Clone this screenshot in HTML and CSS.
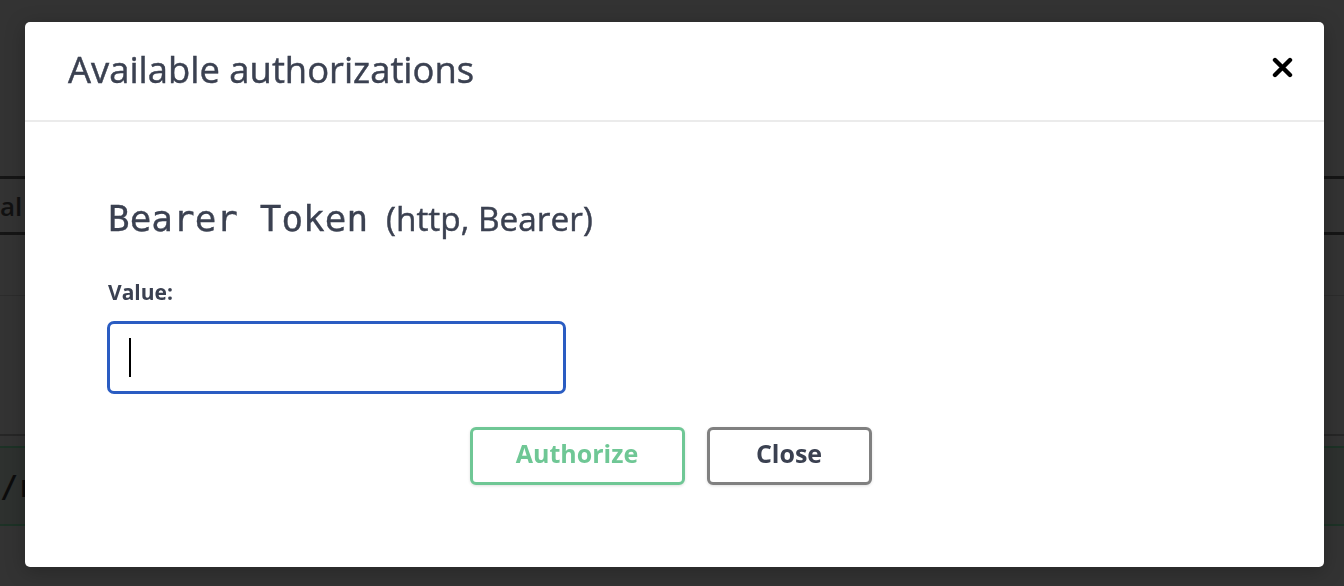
FILE: index.html
```html
<!DOCTYPE html>
<html lang="en">
<head>
<meta charset="utf-8">
<title>Available authorizations</title>
<link rel="stylesheet" href="styles.css">
</head>
<body>
<div class="page">
  <div class="page-gap-top"></div>
  <div class="page-btn-row"><span class="page-btn">al server</span></div>
  <div class="page-gap-a"></div>
  <div class="page-rule-light"></div>
  <div class="page-gap-b"></div>
  <div class="page-rule-dark"></div>
  <div class="page-gap-c"></div>
  <div class="opblock"><span class="opblock-path">/r</span></div>
</div>

<div class="overlay">
  <div class="modal">
    <div class="modal-header">
      <h3 class="modal-title">Available authorizations</h3>
      <button class="modal-close" aria-label="Close">
        <svg width="21" height="21" viewBox="0 0 21 21"><path d="M3 3 L18 18 M18 3 L3 18" stroke="#000" stroke-width="4.4" stroke-linecap="round" fill="none"/></svg>
      </button>
    </div>
    <div class="modal-body">
      <h4 class="auth-title"><code class="auth-name">Bearer Token</code><span class="auth-type">(http, Bearer)</span></h4>
      <label class="field-label">Value:</label>
      <div class="field-input"><span class="caret"></span></div>
      <div class="auth-actions">
        <button class="btn btn-authorize">Authorize</button>
        <button class="btn btn-close">Close</button>
      </div>
    </div>
  </div>
</div>
</body>
</html>
```

FILE: styles.css
```css
html, body {
  margin: 0;
  padding: 0;
}
body {
  width: 1344px;
  height: 586px;
  overflow: hidden;
  background: #333333;
  font-family: "Open Sans", "Noto Sans", sans-serif;
  color: #3b4151;
}

/* dimmed page behind the modal */
.page {
  display: flex;
  flex-direction: column;
}
.page-gap-top { height: 176px; }
.page-btn-row {
  display: flex;
  height: 53px;
  border-top: 3px solid #151515;
  border-bottom: 3px solid #151515;
  align-items: center;
}
.page-btn {
  margin-left: 0;
  font-size: 26px;
  font-weight: 600;
  color: #111;
  white-space: nowrap;
}
.page-gap-a { height: 60px; }
.page-rule-light { height: 1px; background: #2c2c2c; }
.page-gap-b { height: 138px; }
.page-rule-dark { height: 2px; background: #262626; }
.page-gap-c { height: 10px; }
.opblock {
  height: 76px;
  border-top: 2px solid #1d3226;
  border-bottom: 2px solid #1d3226;
  background: #2e312f;
  display: flex;
  align-items: center;
}
.opblock-path {
  margin-left: 0;
  font-family: "DejaVu Sans Mono", monospace;
  font-size: 30px;
  font-weight: bold;
  color: #0c0c0c;
}

/* modal */
.overlay {
  position: fixed;
  inset: 0;
  padding: 22px 0 0 25px;
  box-sizing: border-box;
}
.modal {
  width: 1299px;
  height: 545px;
  background: #ffffff;
  border-radius: 5px;
  box-shadow: 0 4px 20px rgba(0, 0, 0, 0.25);
  display: flex;
  flex-direction: column;
}
.modal-header {
  height: 94px;
  padding: 0 31px 4px 43px;
  border-bottom: 2px solid #ebebeb;
  display: flex;
  align-items: center;
  justify-content: space-between;
}
.modal-title {
  margin: 0;
  font-size: 36.4px;
  line-height: 49px;
  font-weight: 400;
  color: #3b4151;
  -webkit-text-stroke: 0.45px #3b4151;
}
.modal-close {
  border: 0;
  background: none;
  padding: 0;
  width: 21px;
  height: 21px;
  display: flex;
  margin-top: -3px;
}

.modal-body {
  padding: 74px 0 0 82px;
  display: flex;
  flex-direction: column;
}
.auth-title {
  margin: 0;
  line-height: 44px;
  font-weight: 400;
  white-space: nowrap;
  padding-left: 1px;
}
.auth-name {
  font-family: "DejaVu Sans Mono", monospace;
  font-size: 36px;
  color: #3b4151;
  -webkit-text-stroke: 0.3px #3b4151;
}
.auth-type {
  margin-left: 18px;
  font-size: 33.4px;
  color: #3b4151;
  -webkit-text-stroke: 0.45px #3b4151;
}
.field-label {
  margin-top: 31px;
  padding-left: 1px;
  font-size: 21px;
  line-height: 28px;
  font-weight: 700;
}
.field-input {
  margin-top: 15px;
  width: 459px;
  height: 73px;
  box-sizing: border-box;
  border: 3px solid #2a5cc2;
  border-radius: 7px;
  padding-left: 19px;
  display: flex;
  align-items: center;
}
.caret {
  width: 2px;
  height: 39px;
  background: #000;
}

.auth-actions {
  margin-top: 33px;
  padding-right: 90px;
  display: flex;
  justify-content: center;
  gap: 22px;
}
.btn {
  height: 58px;
  box-sizing: border-box;
  border: 3px solid #808080;
  border-radius: 6px;
  background: #fff;
  font-family: "Open Sans", "Noto Sans", sans-serif;
  font-size: 25px;
  line-height: 1;
  font-weight: 700;
  color: #3b4151;
  box-shadow: 0 1px 3px rgba(0, 0, 0, 0.12);
  padding: 0 0 5px;
}
.btn-authorize {
  width: 215px;
  border-color: #6fc795;
  color: #6fc795;
}
.btn-close {
  width: 165px;
}
```
